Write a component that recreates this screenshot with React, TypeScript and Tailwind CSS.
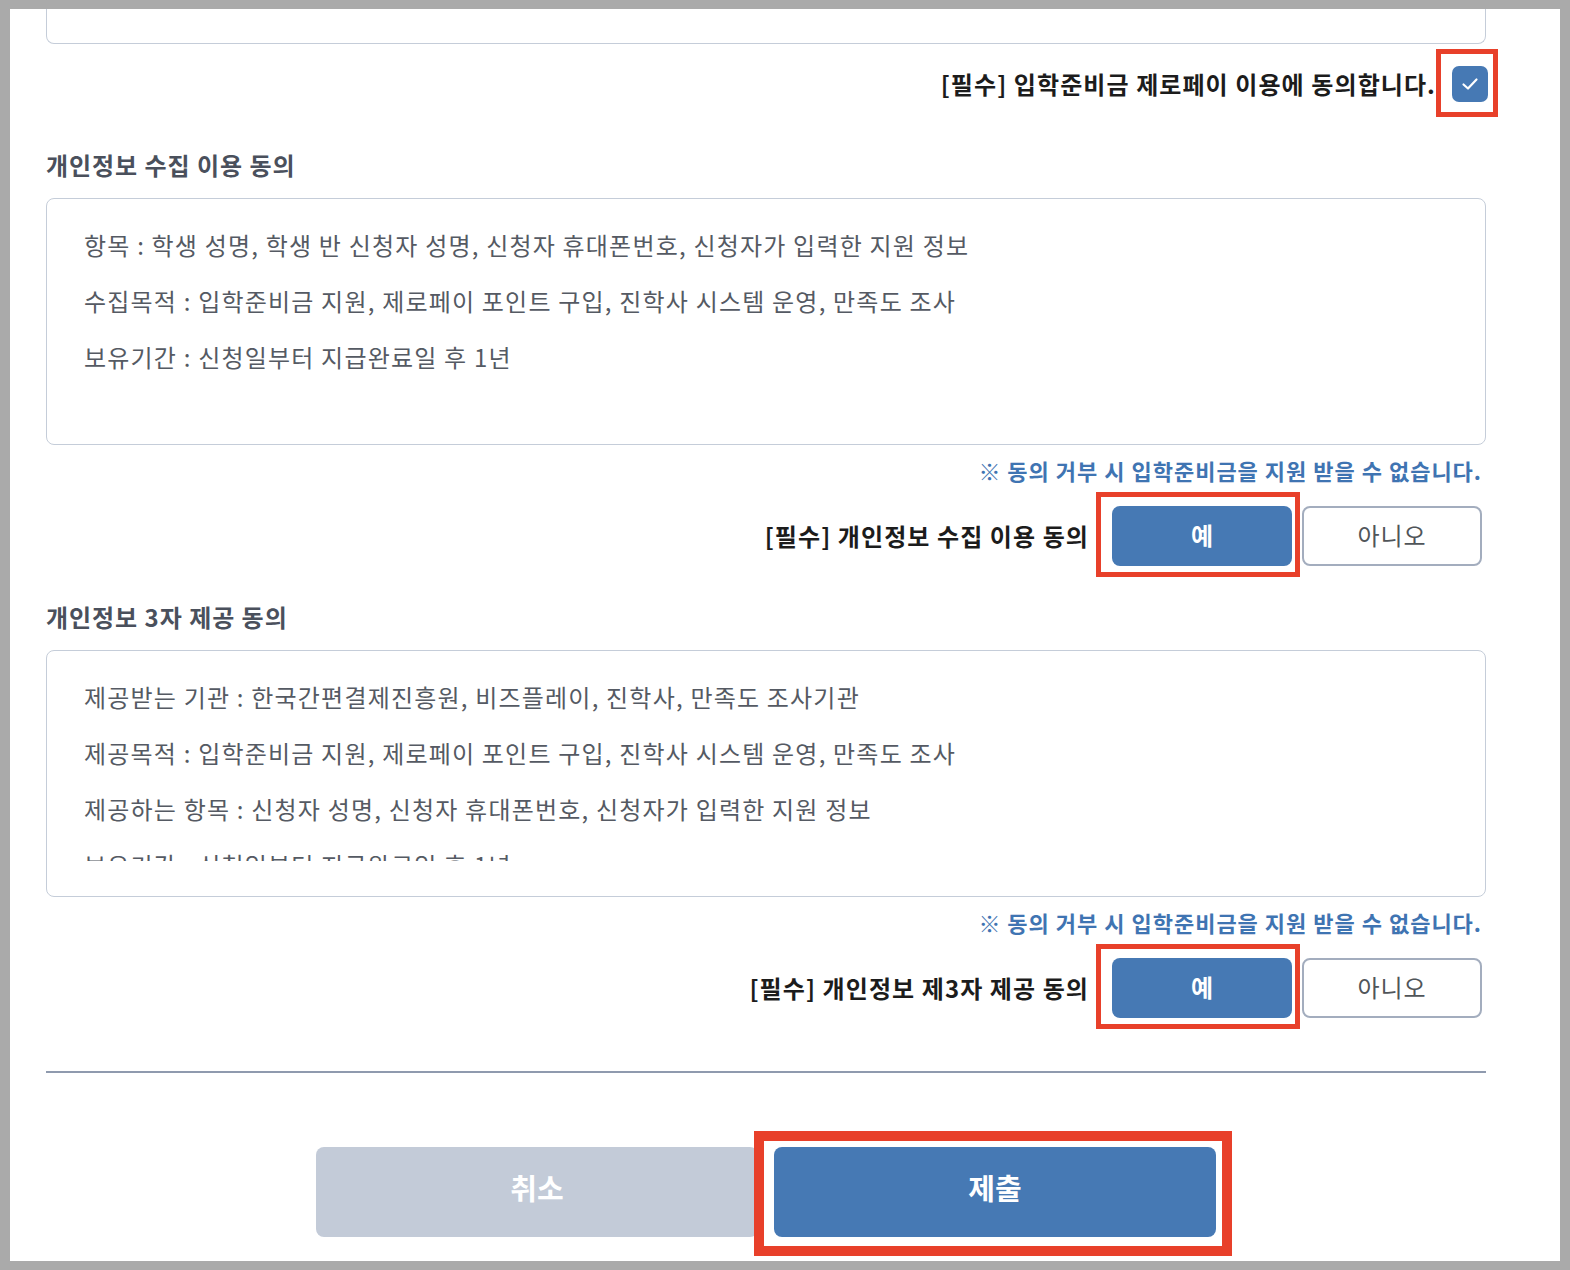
import React from "react";

const FONT = { fontFamily: '"Noto Sans CJK KR", "Noto Sans", sans-serif' };

function Frame({ className }: { className: string }) {
  return <span className={"pointer-events-none absolute border-[#e8402a] " + className} />;
}

function ConsentBox({ lines }: { lines: string[] }) {
  return (
    <div className="h-[247px] rounded-lg border border-[#c5cdd9] bg-white pl-[37px] pr-6 pt-[18px] pb-[35px]">
      <div className="h-[192px] overflow-hidden">
        {lines.map((l, i) => (
          <p key={i} className="text-[24px] leading-[56px] tracking-[0.05em] text-[#555a63] whitespace-nowrap">
            {l}
          </p>
        ))}
      </div>
    </div>
  );
}

function AgreeRow({ label }: { label: string }) {
  return (
    <>
      <p className="mt-[10px] pr-1 text-right text-[22px] leading-[30px] font-bold tracking-[0.045em] text-[#3f74b2]">
        ※ 동의 거부 시 입학준비금을 지원 받을 수 없습니다.
      </p>
      <div className="mt-[21px] flex items-center justify-end pr-1">
        <span className="mr-[23px] text-[24px] font-bold leading-[32px] tracking-[0.045em] text-[#1c1c1c]">{label}</span>
        <div className="relative">
          <button className="flex h-[60px] w-[180px] items-center justify-center rounded-lg bg-[#4679b4] pb-[2px] text-[24px] font-bold text-white">
            예
          </button>
          <Frame className="-left-[16px] -right-[8px] -top-[14px] -bottom-[11px] border-[5px]" />
        </div>
        <button className="ml-[10px] flex h-[60px] w-[180px] items-center justify-center rounded-lg border-2 border-[#a3adbe] bg-white pb-[2px] text-[24px] tracking-[0.04em] text-[#505559]">
          아니오
        </button>
      </div>
    </>
  );
}

export default function App() {
  return (
    <div style={FONT} className="h-[1270px] w-[1570px] bg-[#aaaaaa] pl-[10px] pr-[10px] pt-[9px] pb-[9px]">
      <div className="h-[1252px] w-[1550px] overflow-hidden bg-white pl-[36px] pr-[74px]">
        <div className="h-[35px] rounded-b-lg border-x border-b border-[#c5cdd9]" />

        <div className="mt-[22px] flex items-center justify-end -mr-[2px]">
          <span className="mr-[16px] text-[24px] font-bold leading-[32px] tracking-[0.045em] text-[#1c1c1c]">
            [필수] 입학준비금 제로페이 이용에 동의합니다.
          </span>
          <div className="relative">
            <div className="flex h-[36px] w-[36px] items-center justify-center rounded-[7px] bg-[#4679b4]">
              <svg width="22" height="22" viewBox="0 0 22 22" fill="none">
                <polyline points="4.5,11.5 9,15.5 17.5,6.5" stroke="white" strokeWidth="2.2" strokeLinecap="round" strokeLinejoin="round" />
              </svg>
            </div>
            <Frame className="-left-[16px] -right-[10px] -top-[17px] -bottom-[15px] border-[5px]" />
          </div>
        </div>

        <h2 className="mt-[47px] text-[24px] font-bold leading-[32px] tracking-[0.04em] text-[#4a505c]">
          개인정보 수집 이용 동의
        </h2>
        <div className="mt-[17px]">
          <ConsentBox
            lines={[
              "항목 : 학생 성명, 학생 반 신청자 성명, 신청자 휴대폰번호, 신청자가 입력한 지원 정보",
              "수집목적 : 입학준비금 지원, 제로페이 포인트 구입, 진학사 시스템 운영, 만족도 조사",
              "보유기간 : 신청일부터 지급완료일 후 1년",
            ]}
          />
        </div>
        <AgreeRow label="[필수] 개인정보 수집 이용 동의" />

        <h2 className="mt-[35px] text-[24px] font-bold leading-[32px] tracking-[0.04em] text-[#4a505c]">
          개인정보 3자 제공 동의
        </h2>
        <div className="mt-[17px]">
          <ConsentBox
            lines={[
              "제공받는 기관 : 한국간편결제진흥원, 비즈플레이, 진학사, 만족도 조사기관",
              "제공목적 : 입학준비금 지원, 제로페이 포인트 구입, 진학사 시스템 운영, 만족도 조사",
              "제공하는 항목 : 신청자 성명, 신청자 휴대폰번호, 신청자가 입력한 지원 정보",
              "보유기간 : 신청일부터 지급완료일 후 1년",
            ]}
          />
        </div>
        <AgreeRow label="[필수] 개인정보 제3자 제공 동의" />

        <div className="mt-[53px] h-[2px] bg-[#8f9aae]" />

        <div className="mt-[74px] flex justify-center gap-4">
          <button className="flex h-[90px] w-[442px] items-center justify-center rounded-lg bg-[#c3cbd8] pb-[8px] text-[29px] font-bold text-white">
            취소
          </button>
          <div className="relative">
            <button className="flex h-[90px] w-[442px] items-center justify-center rounded-lg bg-[#4679b4] pb-[8px] text-[29px] font-bold text-white">
              제출
            </button>
            <Frame className="-left-[20px] -right-[16px] -top-[16px] -bottom-[19px] border-[10px]" />
          </div>
        </div>
      </div>
    </div>
  );
}
